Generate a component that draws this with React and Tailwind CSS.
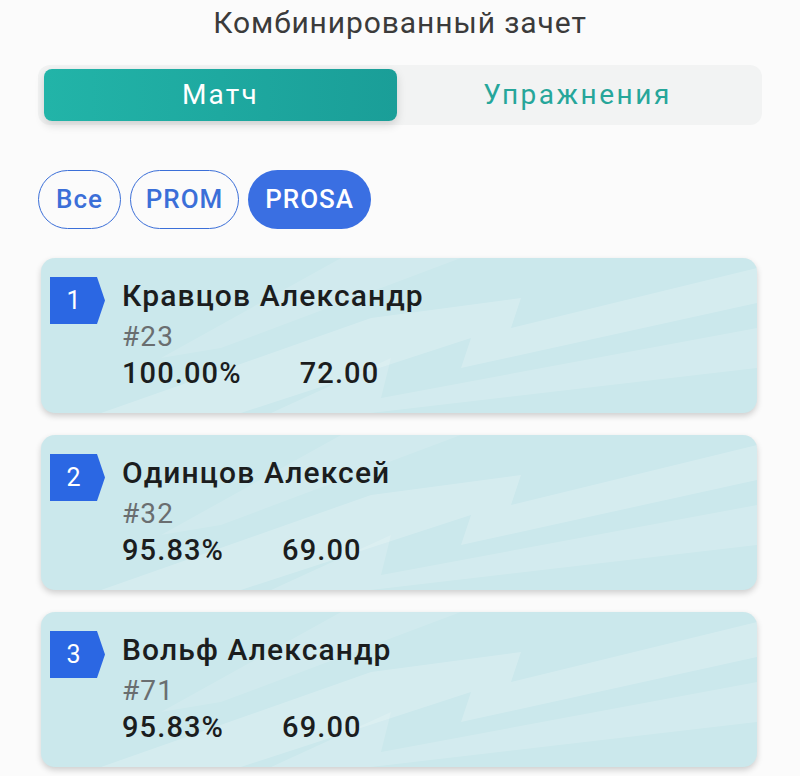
const players = [
  { rank: 1, name: "Кравцов Александр", num: "#23", pct: "100.00%", pts: "72.00" },
  { rank: 2, name: "Одинцов Алексей", num: "#32", pct: "95.83%", pts: "69.00" },
  { rank: 3, name: "Вольф Александр", num: "#71", pct: "95.83%", pts: "69.00" },
];

function Streaks() {
  return (
    <svg
      className="absolute inset-0 h-full w-full pointer-events-none"
      viewBox="0 0 716 155"
      preserveAspectRatio="none"
    >
      <path d="M60 155 L330 60 L480 40 L470 70 L716 10 L716 45 L420 110 L430 80 L200 155 Z" fill="#ffffff" fillOpacity="0.2" />
      <path d="M230 155 L350 100 L340 140 L716 70 L716 110 L330 155 Z" fill="#ffffff" fillOpacity="0.16" />
      <path d="M300 0 L420 0 L180 90 L120 100 Z" fill="#ffffff" fillOpacity="0.12" />
    </svg>
  );
}

function RankBadge({ n }) {
  return (
    <div className="relative h-[47px] w-[55px] shrink-0">
      <svg className="absolute inset-0" width="55" height="47" viewBox="0 0 55 47">
        <path d="M0 0 H47 L55 23.5 L47 47 H0 Z" fill="#2b67e3" />
      </svg>
      <span className="relative flex h-full w-[47px] items-center justify-center text-[25px] text-white">
        {n}
      </span>
    </div>
  );
}

function PlayerCard({ p }) {
  return (
    <div className="relative h-[155px] overflow-hidden rounded-[14px] bg-[#cbe8ec] shadow-[0_3px_6px_rgba(0,0,0,0.18)]">
      <Streaks />
      <div className="relative flex pl-[9px] pt-[19px]">
        <RankBadge n={p.rank} />
        <div className="ml-[17px] flex flex-col tracking-[0.07em]">
          <div className="text-[30px] font-medium leading-[46px] -mt-[4px] text-[#1b1d1e]">{p.name}</div>
          <div className="text-[28px] leading-[35px] text-[#6a6e70]">{p.num}</div>
          <div className="flex text-[29px] font-medium leading-[38px] text-[#1b1d1e]">
            <span>{p.pct}</span>
            <span className="ml-[58px]">{p.pts}</span>
          </div>
        </div>
      </div>
    </div>
  );
}

export default function App() {
  return (
    <div className="min-h-[776px] w-[800px] bg-[#fbfbfb] font-['Roboto',sans-serif]">
      <h1 className="pt-[3px] text-center text-[30px] leading-[40px] tracking-[0.03em] text-[#3b3b3b]">
        Комбинированный зачет
      </h1>

      <div className="mx-[38px] mt-[22px] flex h-[60px] rounded-xl bg-[#f2f3f3] py-[4px] pl-[6px] pr-[4px]">
        <button className="flex w-[353px] items-center justify-center rounded-lg bg-gradient-to-r from-[#22b4a8] to-[#1a9e98] text-[28px] tracking-[0.08em] text-white shadow-[0_4px_10px_rgba(0,0,0,0.15)]">
          Матч
        </button>
        <button className="flex flex-1 items-center justify-center text-[28px] tracking-[0.09em] text-[#26a69a]">
          Упражнения
        </button>
      </div>

      <div className="mx-[38px] mt-[45px] flex gap-[9px] tracking-[0.06em]">
        <button className="h-[59px] rounded-full border-[1.5px] border-[#3b6fd8] px-[17px] text-[26px] font-medium text-[#3b6fd8]">
          Все
        </button>
        <button className="h-[59px] rounded-full border-[1.5px] border-[#3b6fd8] px-[15px] text-[26px] font-medium text-[#3b6fd8]">
          PROM
        </button>
        <button className="h-[59px] rounded-full bg-[#3a6fe2] px-[17px] text-[26px] font-medium text-white">
          PROSA
        </button>
      </div>

      <div className="ml-[41px] mr-[43px] mt-[29px] flex flex-col gap-[22px]">
        {players.map((p) => (
          <PlayerCard key={p.rank} p={p} />
        ))}
      </div>
    </div>
  );
}
